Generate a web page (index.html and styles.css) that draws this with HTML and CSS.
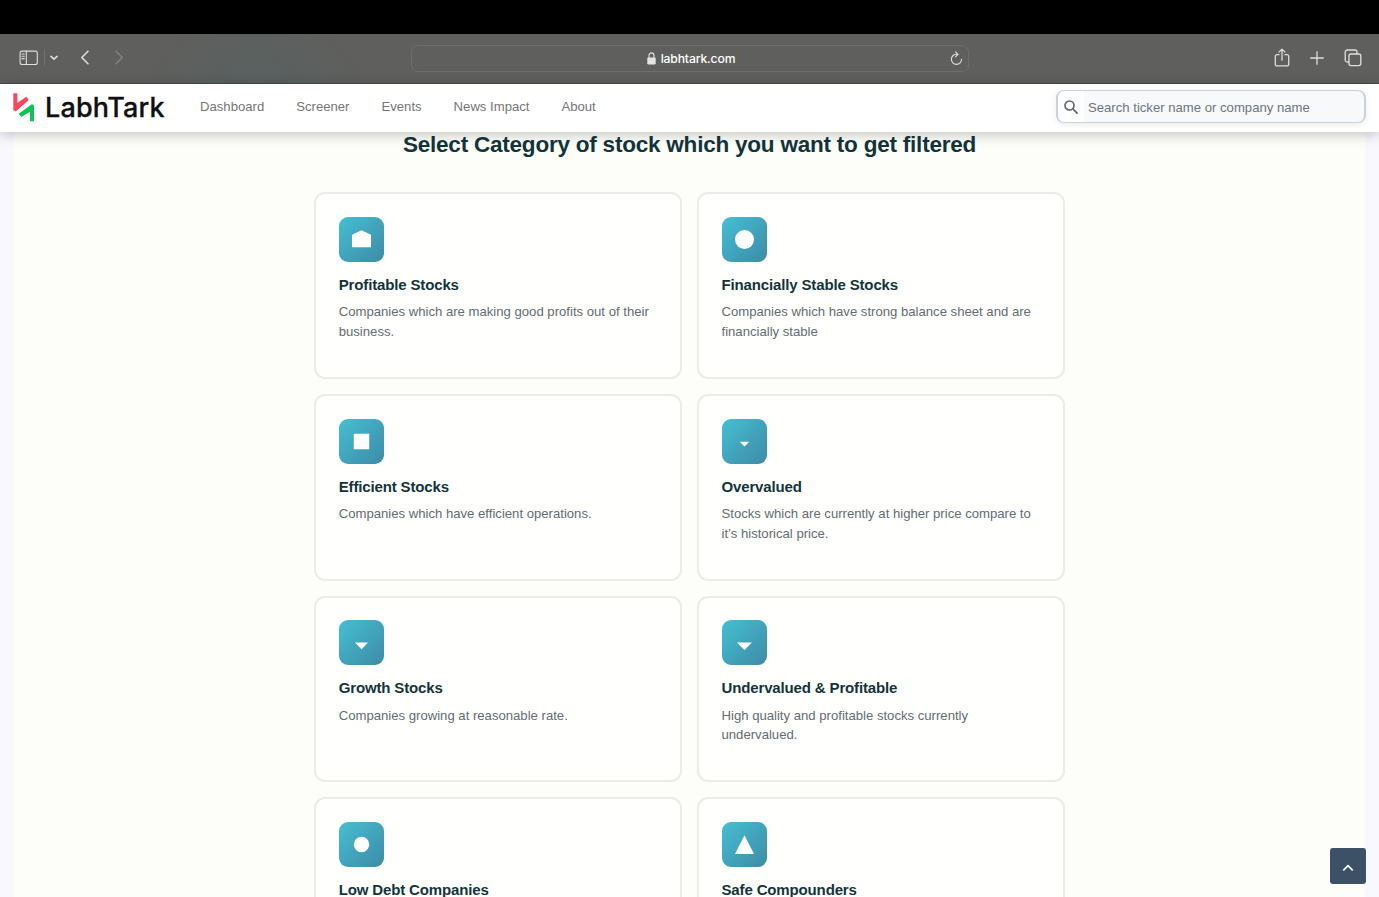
FILE: index.html
```html
<!DOCTYPE html>
<html lang="en">
  <head>
    <meta charset="utf-8" />
    <title>LabhTark - Stock Screener</title>
    <link rel="stylesheet" href="styles.css">
  </head>
  <body>
    <div class="topbar"></div>
    <div class="toolbar">
      <div class="tools">
        <svg class="ico sidebar" width="20" height="16" viewBox="0 0 20 16">
          <rect x="1.1" y="1.1" width="17.2" height="13.4" rx="2"/>
          <path d="M7.3 1v13.5M3 4h2.2M3 6.3h2.2M3 8.6h2.2"/>
        </svg>
        <span class="divider"></span>
        <svg class="ico down" width="8" height="6" viewBox="0 0 8 6"><path d="M1 1.3l3 2.9 3-2.9"/></svg>
        <svg class="ico back" width="10" height="15" viewBox="0 0 10 15"><path d="M8 1.2L1.8 7.5 8 13.8"/></svg>
        <svg class="ico forward" width="10" height="15" viewBox="0 0 10 15"><path d="M2 1.2l6.2 6.3L2 13.8"/></svg>
      </div>
      <div class="address">
        <svg class="lock" width="9" height="13" viewBox="0 0 9 13">
          <rect x="0.3" y="5.4" width="8.4" height="7" rx="1.2"/>
          <path d="M2 6V3.6a2.5 2.7 0 0 1 5 0V6"/>
        </svg>
        <span>labhtark.com</span>
        <svg class="ico reload" width="13" height="15" viewBox="0 0 13 15">
          <path d="M6.8 3.2A5.1 5.1 0 1 0 11.6 8.3M5.5 0.9l2.6 2.4-2.6 2.5"/>
        </svg>
      </div>
      <div class="tools right">
        <svg class="ico" width="16" height="20" viewBox="0 0 16 20">
          <path d="M5 6.7H3A1.6 1.6 0 0 0 1.3 8.3v8A1.6 1.6 0 0 0 3 17.9h10a1.6 1.6 0 0 0 1.7-1.6v-8A1.6 1.6 0 0 0 13 6.7h-2M8 12.3V1.3M5 4.1l3-3 3 3"/>
        </svg>
        <svg class="ico" width="14" height="14" viewBox="0 0 14 14"><path d="M7 0.7v12.6M0.7 7h12.6"/></svg>
        <svg class="ico" width="18" height="18" viewBox="0 0 18 18">
          <rect x="5" y="5" width="11.8" height="11.6" rx="2"/>
          <path d="M4.8 13H3.2A2 2 0 0 1 1.2 11V3A2 2 0 0 1 3.2 1H11A2 2 0 0 1 13 3V4.8"/>
        </svg>
      </div>
    </div>

    <header class="header">
      <a class="brand">
        <svg width="22" height="29" viewBox="0 0 22 29">
          <path fill="#fd4560" d="M0.3 0.3H4.3V10L13.3 3.7 15.7 7 3 18.3 0.3 17.3z"/>
          <path fill="#0cc555" d="M21 28.3H17V18.7L8.3 24 5.7 20.7 18.7 11.3 21 12z"/>
        </svg>
        <span>LabhTark</span>
      </a>
      <nav class="nav">
        <a>Dashboard</a>
        <a>Screener</a>
        <a>Events</a>
        <a>News Impact</a>
        <a>About</a>
      </nav>
      <div class="search">
        <div class="search-icon">
          <svg width="14" height="14" viewBox="0 0 14 14"><circle cx="5.5" cy="5.5" r="4.5"/><path d="M8.9 8.9l4.2 4.3"/></svg>
        </div>
        <input type="text" placeholder="Search ticker name or company name" />
      </div>
    </header>

    <main class="main">
      <h1>Select Category of stock which you want to get filtered</h1>
      <div class="cards">
        <div class="card">
          <svg class="badge" viewBox="0 0 45 45"><path d="M13 17.7L22.5 13.2 32 17.7V30.2H13z"/></svg>
          <h2>Profitable Stocks</h2>
          <p>Companies which are making good profits out of their business.</p>
        </div>
        <div class="card">
          <svg class="badge" viewBox="0 0 45 45"><circle cx="22.5" cy="22.5" r="9.5"/></svg>
          <h2>Financially Stable Stocks</h2>
          <p>Companies which have strong balance sheet and are financially stable</p>
        </div>
        <div class="card">
          <svg class="badge" viewBox="0 0 45 45"><path d="M14.8 14.8h15.4v15.4H14.8z"/></svg>
          <h2>Efficient Stocks</h2>
          <p>Companies which have efficient operations.</p>
        </div>
        <div class="card">
          <svg class="badge" viewBox="0 0 45 45"><path d="M17.8 22.7h9.4l-4.7 4.7z"/></svg>
          <h2>Overvalued</h2>
          <p>Stocks which are currently at higher price compare to it’s historical price.</p>
        </div>
        <div class="card">
          <svg class="badge" viewBox="0 0 45 45"><path d="M16 22.5h13l-6.5 6.7z"/></svg>
          <h2>Growth Stocks</h2>
          <p>Companies growing at reasonable rate.</p>
        </div>
        <div class="card">
          <svg class="badge" viewBox="0 0 45 45"><path d="M15 22.5h15l-7.5 7.6z"/></svg>
          <h2>Undervalued &amp; Profitable</h2>
          <p>High quality and profitable stocks currently undervalued.</p>
        </div>
        <div class="card">
          <svg class="badge" viewBox="0 0 45 45"><circle cx="22.5" cy="22.5" r="7.7"/></svg>
          <h2>Low Debt Companies</h2>
        </div>
        <div class="card">
          <svg class="badge" viewBox="0 0 45 45"><path d="M22.5 13.3L32 32H13z"/></svg>
          <h2>Safe Compounders</h2>
        </div>
      </div>
    </main>

    <button type="button" class="totop">
      <svg width="12" height="8" viewBox="0 0 12 8"><path d="M1.3 6.4L6 1.7l4.7 4.7"/></svg>
    </button>
  </body>
</html>
```
FILE: styles.css
```css
* {
  box-sizing: border-box;
}
body {
  margin: 0;
  height: 897px;
  overflow: hidden;
  background: #f8f8fe;
  font-family: "Liberation Sans", Arial, sans-serif;
  font-size: 13.14px;
}
.topbar {
  height: 34px;
  background: #000;
}

/* browser toolbar */
.toolbar {
  display: grid;
  grid-template-columns: 1fr 558px 1fr;
  align-items: center;
  height: 49.5px;
  padding: 0 17.5px 0 18.5px;
  background: radial-gradient(ellipse 110px 60px at 255px 42px, #5a6160 10%, transparent), #5f5f5d;
  border-bottom: 1px solid #4c4c4a;
}
.tools {
  display: flex;
  align-items: center;
  padding-bottom: 1px;
}
.right {
  justify-content: flex-end;
  gap: 20px;
}
.ico {
  fill: none;
  stroke: #dededd;
  stroke-width: 1.3;
  stroke-linecap: round;
  stroke-linejoin: round;
}
.sidebar {
  stroke-width: 1.1;
}
.divider {
  width: 1px;
  height: 17px;
  margin: 0 5.5px 0 5px;
  background: #727270;
}
.down {
  stroke-width: 1.6;
}
.back {
  margin-left: 22px;
  stroke-width: 1.6;
}
.forward {
  margin-left: 24px;
  stroke: #858583;
}
.address {
  display: flex;
  align-items: center;
  justify-content: center;
  gap: 5px;
  position: relative;
  height: 27px;
  padding-left: 2px;
  border: 1px solid #6e6e6c;
  border-radius: 7px;
  color: #fff;
  font: 500 12.2px Inter, sans-serif;
  letter-spacing: -0.16px;
}
.lock {
  fill: #e4e4e3;
}
.lock path {
  fill: none;
  stroke: #e4e4e3;
  stroke-width: 1.1;
}
.reload {
  position: absolute;
  right: 5px;
  top: 5px;
  stroke-width: 1.1;
}

/* site header */
.header {
  display: flex;
  align-items: center;
  position: relative;
  z-index: 1;
  height: 48.5px;
  padding: 0 13px 2px;
  background: #fff;
  box-shadow: 0 2px 13px rgba(0, 0, 0, 0.25);
}
.brand {
  display: flex;
  align-items: center;
  width: 187px;
  padding-top: 2px;
  color: #111;
  font: 500 27px Inter, sans-serif;
  -webkit-text-stroke: 0.3px #111;
}
.brand span {
  margin-left: 10px;
  letter-spacing: 0.15px;
}
.nav {
  display: flex;
  gap: 32px;
  padding-bottom: 1px;
  color: #757575;
}
.search {
  display: flex;
  width: 310px;
  height: 33px;
  margin-left: auto;
  overflow: hidden;
  background: #f8f9fb;
  border: solid #c9d2da;
  border-width: 1px 2px;
  border-radius: 8px;
  box-shadow: 0 2px 6px rgba(0, 0, 0, 0.08);
}
.search-icon {
  display: flex;
  align-items: center;
  justify-content: center;
  width: 26px;
  background: #fff;
}
.search-icon svg {
  fill: none;
  stroke: #5c6975;
  stroke-width: 1.7;
  stroke-linecap: round;
}
.search input {
  flex: 1;
  padding: 1px 4px 0;
  border: 0;
  background: transparent;
  font: inherit;
}
.search input::placeholder {
  color: #6c757d;
}

/* category cards */
.main {
  height: 765px;
  margin: 0 14px;
  overflow: hidden;
  background: #fdfdf9;
}
h1 {
  margin: 0;
  color: #13343b;
  font-size: 22.52px;
  line-height: 25px;
  letter-spacing: -0.01em;
  text-align: center;
}
.cards {
  display: grid;
  grid-template-columns: 1fr 1fr;
  grid-auto-rows: 186.7px;
  gap: 15px;
  width: 750.6px;
  margin: 35.4px auto 0;
}
.card {
  padding: 22.5px;
  background: #fffffd;
  border: 2px solid #ebebe8;
  border-radius: 11px;
}
.badge {
  display: block;
  width: 45px;
  height: 45px;
  border-radius: 9px;
  background: linear-gradient(135deg, #45bfd2, #3d8ba6);
  fill: #fff;
}
.card h2 {
  margin: 14px 0 8.5px;
  color: #13343b;
  font-size: 15.02px;
  line-height: 18px;
  letter-spacing: -0.01em;
}
.card p {
  margin: 0;
  color: #626c71;
  line-height: 19.7px;
}

.totop {
  display: flex;
  align-items: center;
  justify-content: center;
  position: fixed;
  right: 13px;
  bottom: 13px;
  width: 36.5px;
  height: 36.5px;
  padding: 5px 0 0;
  border: 0;
  border-radius: 3px;
  background: #3d5166;
}
.totop svg {
  fill: none;
  stroke: #fff;
  stroke-width: 1.7;
}
```
